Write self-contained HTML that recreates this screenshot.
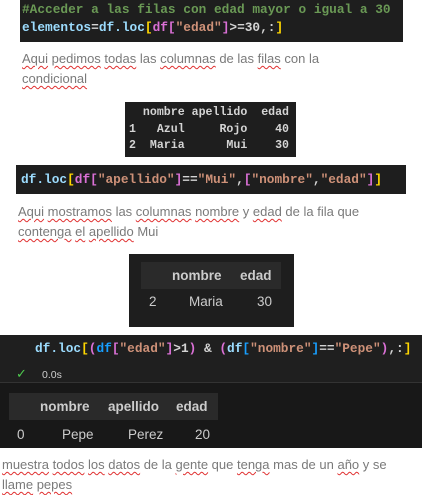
<!DOCTYPE html>
<html><head><meta charset="utf-8"><style>
*{margin:0;padding:0;box-sizing:border-box}
body{width:422px;height:495px;background:#fff;position:relative;overflow:hidden;font-family:"Liberation Sans",sans-serif}
.abs{position:absolute}
.code{background:#1e1e1e;font-family:"Liberation Mono",monospace;white-space:pre;color:#9cdcfe;font-weight:bold}
.c{color:#6a9955}.y{color:#ffd700}.p{color:#da70d6}.s{color:#ce9178}.w{color:#d4d4d4}.b{color:#179fff}
.txt{color:#7a7a7a;font-size:13px;line-height:20px}
.sq{text-decoration:underline wavy #e03030;text-decoration-thickness:1px;text-underline-offset:2px}
.tbl{font-family:"Liberation Sans",sans-serif;color:#ccc;font-size:13.5px}
</style></head><body>

<div class="abs code" style="left:20px;top:0;width:383px;height:42px;font-size:12.8px;line-height:18px;padding:1px 0 0 2px"><span class="c">#Acceder a las filas con edad mayor o igual a 30</span>
elementos<span class="w">=</span>df.loc<span class="y">[</span><span class="p">df[</span><span class="s">"edad"</span><span class="p">]</span><span class="w">&gt;=30,:</span><span class="y">]</span></div>

<div class="abs txt" style="left:22px;top:49px;width:360px"><span class="sq">Aqui</span> <span class="sq">pedimos</span> <span class="sq">todas</span> las <span class="sq">columnas</span> de las <span class="sq">filas</span> con la<br><span class="sq">condicional</span></div>

<div class="abs code" style="left:125px;top:102px;width:171px;height:55px;font-size:11.6px;line-height:16.5px;padding:3px 0 0 4px;color:#d4d4d4">  nombre apellido  edad
1   Azul     Rojo    40
2  Maria      Mui    30</div>

<div class="abs code" style="left:16px;top:165px;width:390px;height:29px;font-size:12.8px;line-height:18px;padding:6px 0 0 5px">df.loc<span class="y">[</span><span class="p">df[</span><span class="s">"apellido"</span><span class="p">]</span><span class="w">==</span><span class="s">"Mui"</span><span class="w">,</span><span class="p">[</span><span class="s">"nombre"</span><span class="w">,</span><span class="s">"edad"</span><span class="p">]</span><span class="y">]</span></div>

<div class="abs txt" style="left:18px;top:202px;width:380px"><span class="sq">Aqui</span> <span class="sq">mostramos</span> las <span class="sq">columnas</span> <span class="sq">nombre</span> y <span class="sq">edad</span> de la fila que<br><span class="sq">contenga</span> <span class="sq">el</span> <span class="sq">apellido</span> Mui</div>

<div class="abs" style="left:129px;top:254px;width:165px;height:73px;background:#1e1e1e"></div>
<div class="abs" style="left:141px;top:262px;width:140px;height:27px;background:#2a2a2a"></div>
<div class="abs tbl" style="left:172px;top:268px;font-weight:bold">nombre</div>
<div class="abs tbl" style="left:240px;top:268px;font-weight:bold">edad</div>
<div class="abs tbl" style="left:149px;top:294px">2</div>
<div class="abs tbl" style="left:189px;top:294px">Maria</div>
<div class="abs tbl" style="left:257px;top:294px">30</div>

<div class="abs code" style="left:0;top:335px;width:422px;height:48px;background:#1f1f1f;font-size:12.8px;line-height:18px;padding:5px 0 0 35px">df.loc<span class="y">[</span><span class="p">(</span><span class="b">df</span><span class="p">[</span><span class="s">"edad"</span><span class="p">]</span><span class="w">&gt;1</span><span class="p">)</span><span class="w"> &amp; </span><span class="p">(</span>df<span class="b">[</span><span class="s">"nombre"</span><span class="b">]</span><span class="w">==</span><span class="s">"Pepe"</span><span class="p">)</span><span class="w">,:</span><span class="y">]</span></div>
<div class="abs" style="left:16px;top:366px;color:#4ec94e;font-size:13px">✓</div>
<div class="abs" style="left:42px;top:369px;color:#cfcfcf;font-size:10.5px">0.0s</div>
<div class="abs" style="left:0;top:382px;width:422px;height:1px;background:#333"></div>
<div class="abs" style="left:0;top:383px;width:422px;height:65px;background:#181818"></div>
<div class="abs" style="left:9px;top:393px;width:209px;height:27px;background:#2a2a2a"></div>
<div class="abs tbl" style="left:40px;top:399px;font-weight:bold">nombre</div>
<div class="abs tbl" style="left:108px;top:399px;font-weight:bold">apellido</div>
<div class="abs tbl" style="left:176px;top:399px;font-weight:bold">edad</div>
<div class="abs tbl" style="left:17px;top:427px">0</div>
<div class="abs tbl" style="left:62px;top:427px">Pepe</div>
<div class="abs tbl" style="left:128px;top:427px">Perez</div>
<div class="abs tbl" style="left:195px;top:427px">20</div>

<div class="abs txt" style="left:2px;top:455px;width:420px"><span class="sq">muestra</span> <span class="sq">todos</span> <span class="sq">los</span> <span class="sq">datos</span> de la <span class="sq">gente</span> que <span class="sq">tenga</span> mas de un <span class="sq">año</span> y se<br><span class="sq">llame</span> <span class="sq">pepes</span></div>
</body></html>
